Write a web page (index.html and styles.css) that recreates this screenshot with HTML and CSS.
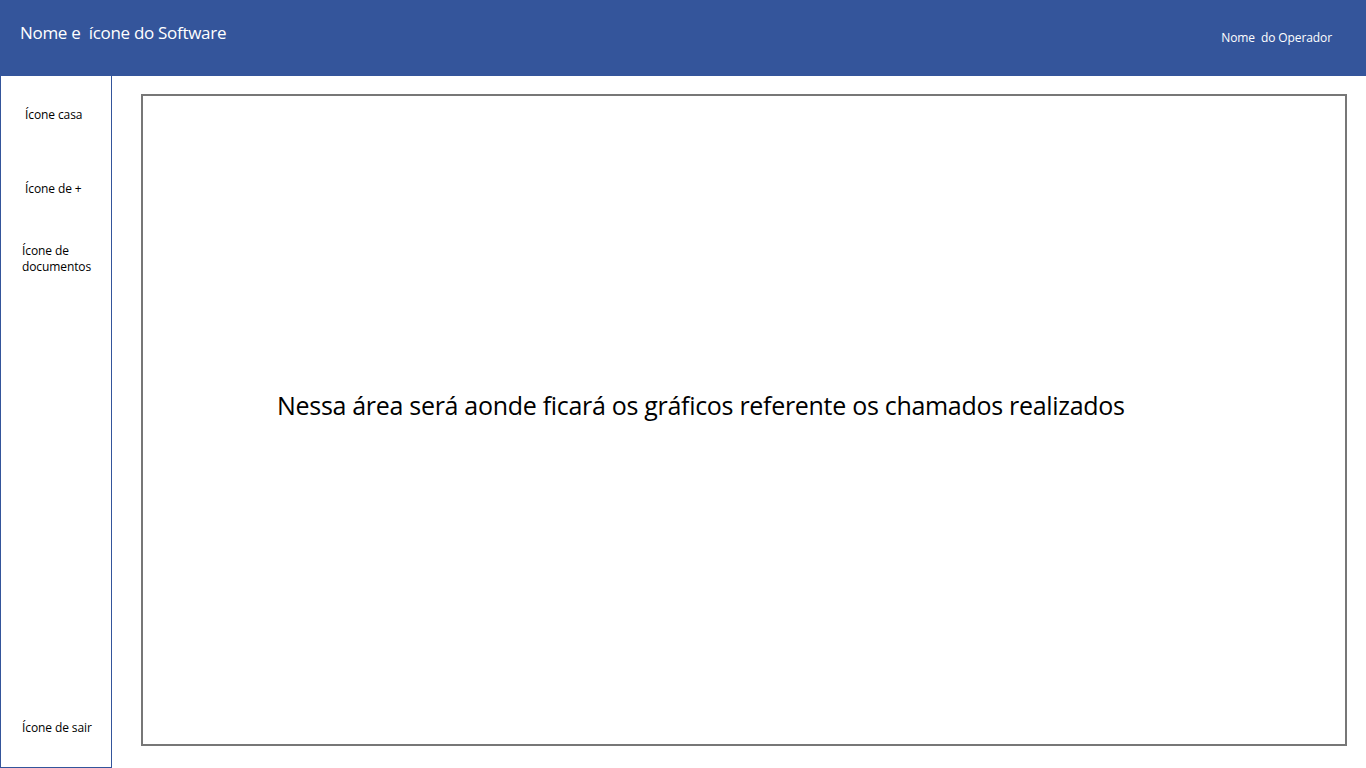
FILE: index.html
```html
<!DOCTYPE html>
<html lang="pt-BR">
<head>
<meta charset="utf-8">
<title>Dashboard</title>
<link rel="stylesheet" href="styles.css">
</head>
<body>
<header class="topbar">
  <div class="brand">Nome e&nbsp; ícone do Software</div>
  <div class="operator">Nome&nbsp; do Operador</div>
</header>
<div class="layout">
  <nav class="sidebar">
    <div class="nav-top">
      <div class="nav-item item-home">Ícone casa</div>
      <div class="nav-item item-add">Ícone de +</div>
      <div class="nav-item item-docs">Ícone de<br>documentos</div>
    </div>
    <div class="nav-item item-exit">Ícone de sair</div>
  </nav>
  <main class="content">
    <section class="chart-area">
      <p class="chart-text">Nessa área será aonde ficará os gráficos referente os chamados realizados</p>
    </section>
  </main>
</div>
</body>
</html>
```

FILE: styles.css
```css
* { box-sizing: border-box; }
html, body {
  margin: 0;
  padding: 0;
  width: 1366px;
  height: 768px;
  overflow: hidden;
  background: #ffffff;
  font-family: "Open Sans", "Noto Sans", sans-serif;
  color: #000;
}
.topbar {
  height: 76px;
  background: #34559b;
  color: #ffffff;
  display: flex;
  justify-content: space-between;
}
.brand {
  font-size: 17px;
  padding: 21px 0 0 20px;
  letter-spacing: -0.3px;
}
.operator {
  font-size: 12px;
  padding: 29px 34px 0 0;
  letter-spacing: -0.1px;
}
.layout {
  display: flex;
  height: 692px;
}
.sidebar {
  width: 112px;
  height: 692px;
  border: 1px solid #34559b;
  border-top: none;
  display: flex;
  flex-direction: column;
  justify-content: space-between;
  font-size: 12px;
  letter-spacing: -0.1px;
  line-height: 16px;
}
.nav-top { display: flex; flex-direction: column; }
.nav-item { white-space: nowrap; }
.item-home { padding: 31px 0 0 24px; }
.item-add { padding: 58px 0 0 24px; }
.item-docs { padding: 46px 0 0 21px; }
.item-exit { padding: 0 0 31px 21px; }
.content {
  flex: 1;
  padding: 18px 0 0 29px;
}
.chart-area {
  width: 1206px;
  height: 652px;
  border: 2px solid #777777;
  padding: 292px 0 0 134px;
}
.chart-text {
  margin: 0;
  font-size: 25px;
  letter-spacing: -0.3px;
  white-space: nowrap;
}
```
